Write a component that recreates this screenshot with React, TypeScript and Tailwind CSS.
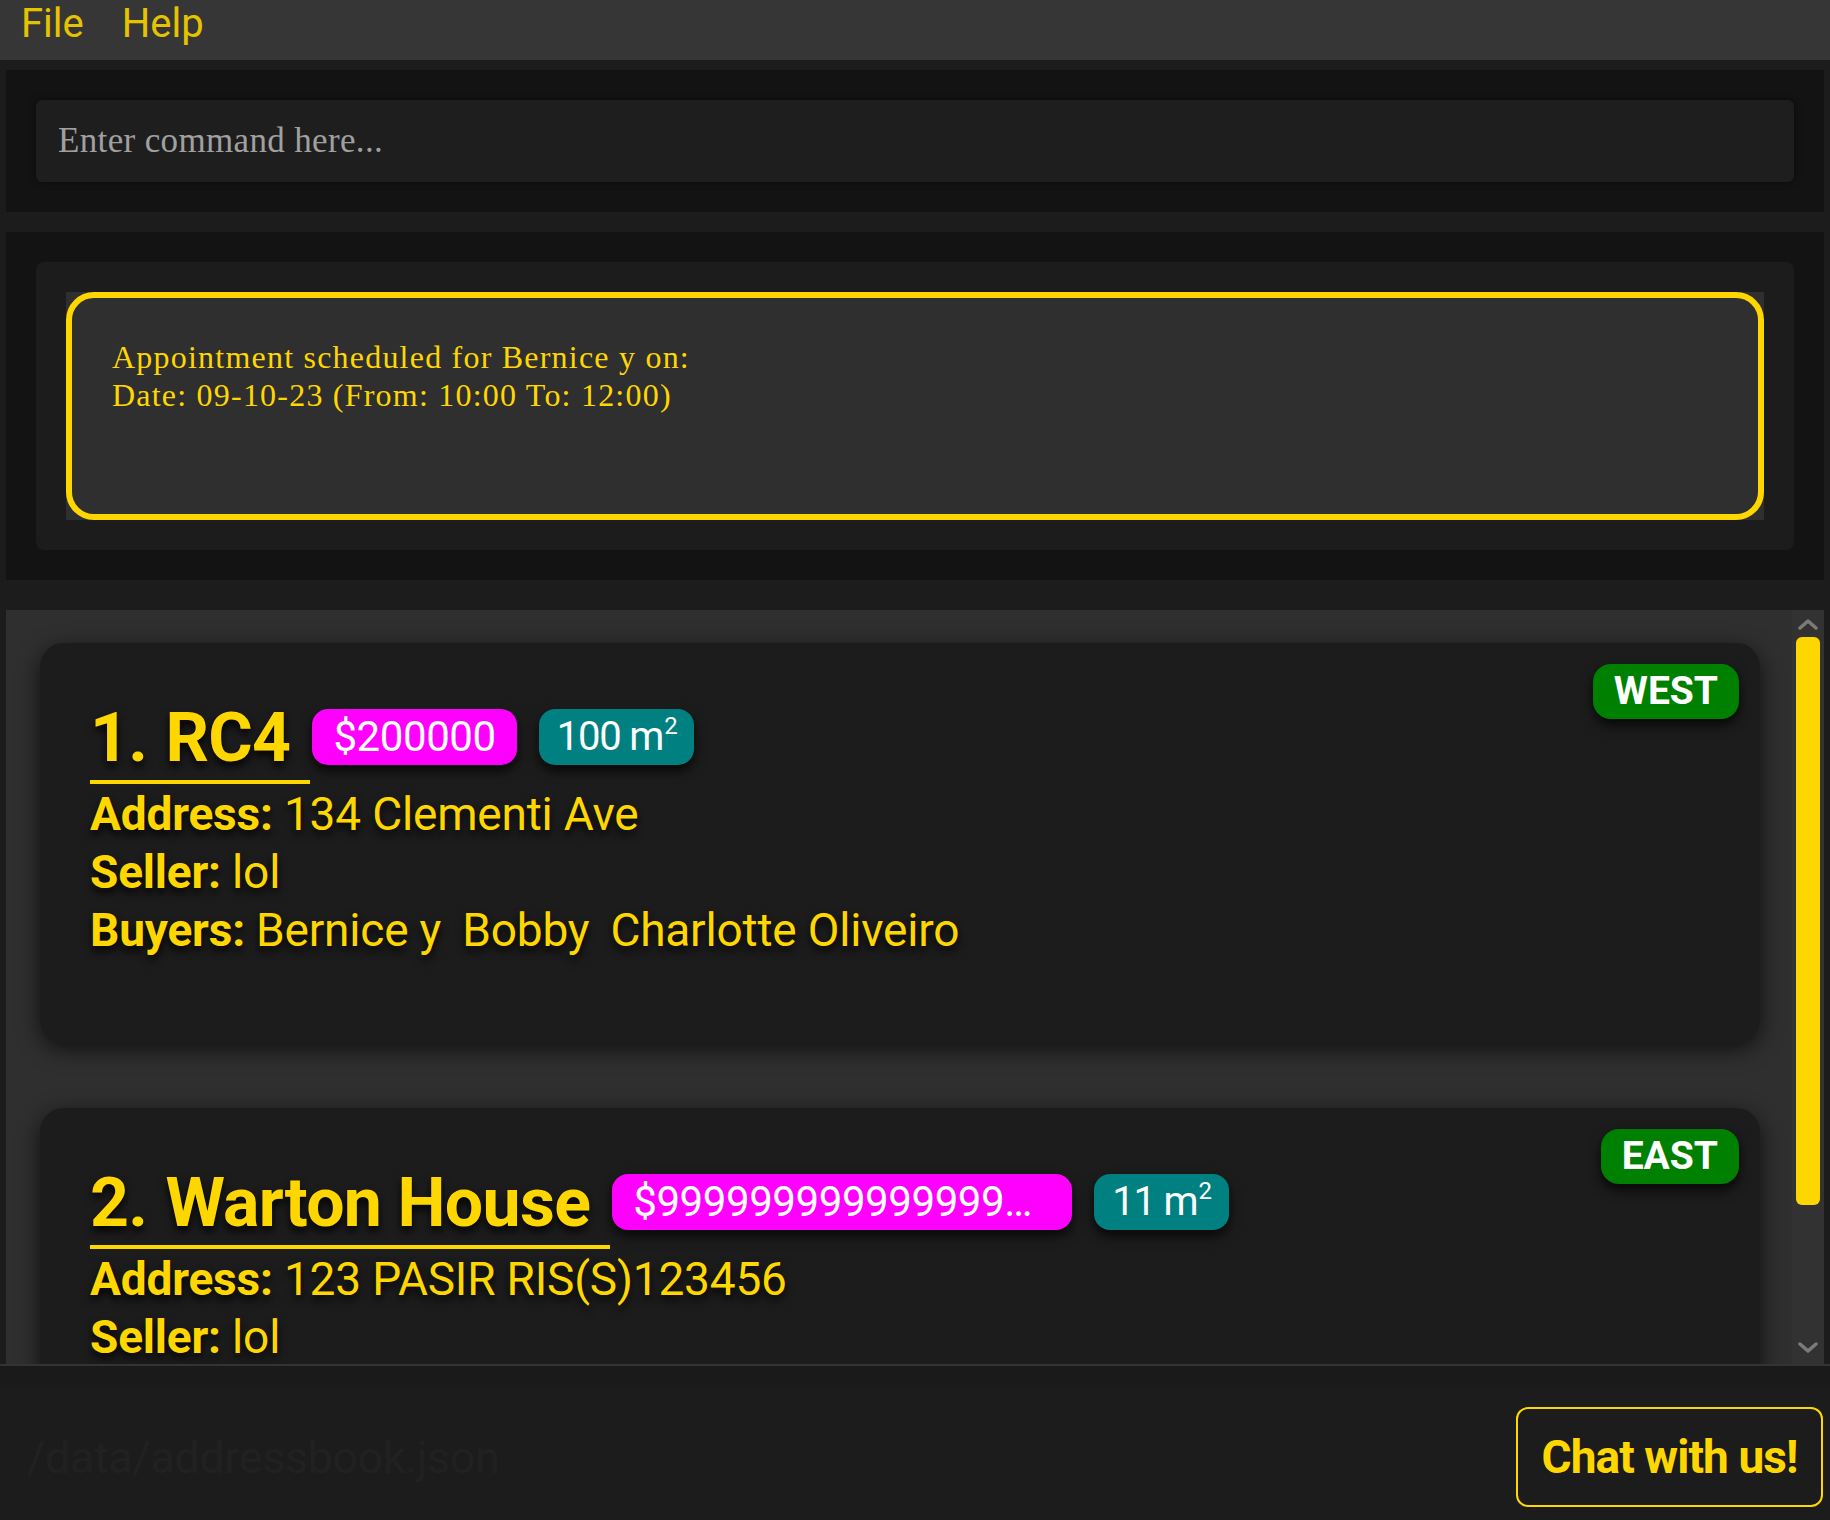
import React from "react";

const ts = "[text-shadow:0_5px_8px_rgba(0,0,0,0.9)]";

function Chevron({ down }: { down?: boolean }) {
  return (
    <svg width="20" height="11" viewBox="0 0 20 11" fill="none">
      <polyline
        points={down ? "2,2 10,9 18,2" : "2,9 10,2 18,9"}
        stroke="#7b7b7b"
        strokeWidth="3.5"
        strokeLinecap="round"
        strokeLinejoin="round"
      />
    </svg>
  );
}

type Card = {
  idx: number;
  name: string;
  price: string;
  area: string;
  region: string;
  address: string;
  seller: string;
  buyers: string[];
};

const cards: Card[] = [
  {
    idx: 1,
    name: "RC4",
    price: "$200000",
    area: "100",
    region: "WEST",
    address: "134 Clementi Ave",
    seller: "lol",
    buyers: ["Bernice y", "Bobby", "Charlotte Oliveiro"],
  },
  {
    idx: 2,
    name: "Warton House",
    price: "$9999999999999999999999999",
    area: "11",
    region: "EAST",
    address: "123 PASIR RIS(S)123456",
    seller: "lol",
    buyers: ["Bobby"],
  },
];

function PropertyCard({ c }: { c: Card }) {
  return (
    <div className="relative h-[400px] w-[1720px] shrink-0 rounded-[24px] bg-[#1c1c1c] pl-[50px] pt-[61px] shadow-[0_6px_22px_rgba(0,0,0,0.65)] text-[#ffd700]">
      <div className="absolute right-[21px] top-[21px] flex h-[55px] items-center rounded-[18px] bg-[#008000] px-[21px] text-[39px] font-bold leading-none text-white shadow-[0_6px_12px_rgba(0,0,0,0.75)]">
        {c.region}
      </div>
      <div className="flex items-start">
        <div className={`flex border-b-4 border-[#ffd700] pb-[8px] pr-[20px] text-[68px] font-bold leading-[68px] tracking-[-0.01em] ${ts}`}>
          <span>{c.idx}.</span>
          <span className="ml-[18px]">{c.name}</span>
        </div>
        <div className="ml-[2px] mt-[5px] flex h-[56px] min-w-0 max-w-[460px] items-center rounded-[16px] bg-[#ff00ff] px-[21px] text-[42px] leading-none tracking-[-0.01em] text-white shadow-[0_6px_12px_rgba(0,0,0,0.75)]">
          <span className="truncate">{c.price}</span>
        </div>
        <div className="ml-[22px] mt-[5px] flex h-[56px] items-center rounded-[16px] bg-[#008080] px-[18px] text-[40px] leading-none tracking-[-0.03em] text-white shadow-[0_6px_12px_rgba(0,0,0,0.75)]">
          <span>{c.area} m</span>
          <span className="relative -top-[11px] ml-[1px] text-[24px]">2</span>
        </div>
      </div>
      <div className={`mt-[1px] text-[46px] leading-[58px] tracking-[-0.004em] ${ts}`}>
        <div>
          <span className="font-bold">Address:</span> {c.address}
        </div>
        <div>
          <span className="font-bold">Seller:</span> {c.seller}
        </div>
        <div className="flex">
          <span className="font-bold">Buyers:</span>
          <span className="ml-[11px] flex gap-[21px]">
            {c.buyers.map((b) => (
              <span key={b}>{b}</span>
            ))}
          </span>
        </div>
      </div>
    </div>
  );
}

export default function App() {
  return (
    <div className="flex h-[1520px] w-[1830px] flex-col overflow-hidden bg-[#1c1c1c] font-['Roboto',sans-serif]">
      {/* Menu bar */}
      <div className="flex h-[60px] shrink-0 items-start gap-[38px] bg-[#363636] px-[21px] pt-[4px] text-[40px] leading-[40px] text-[#e6c300]">
        <span>File</span>
        <span>Help</span>
      </div>

      <div className="flex flex-col px-[6px] pt-[10px]">
        {/* Command box */}
        <div className="bg-[#131313] p-[30px]">
          <input
            className="h-[82px] w-full rounded-[6px] bg-[#1e1e1e] px-[22px] font-['Liberation_Serif',serif] text-[35px] tracking-[0.01em] text-[#a0a0a0] outline-none placeholder:text-[#a0a0a0] shadow-[0_0_6px_rgba(0,0,0,0.5)]"
            placeholder="Enter command here..."
          />
        </div>

        {/* Result display */}
        <div className="mt-[20px] bg-[#131313] p-[30px]">
          <div className="rounded-[8px] bg-[#1c1c1c] p-[30px]">
            <div className="h-[228px] bg-[#2f2f2f]">
              <div className="h-full rounded-[28px] border-[6px] border-[#ffd700] pl-[40px] pt-[40px] font-['Liberation_Serif',serif] text-[32px] leading-[38px] tracking-[0.038em] text-[#ffd700]">
                <div>Appointment scheduled for Bernice y on:</div>
                <div>Date: 09-10-23 (From: 10:00 To: 12:00)</div>
              </div>
            </div>
          </div>
        </div>

        {/* List panel */}
        <div className="mt-[30px] flex h-[754px] bg-[#2f2f2f]">
          <div className="flex flex-1 flex-col gap-[65px] overflow-hidden pl-[34px] pt-[33px]">
            {cards.map((c) => (
              <PropertyCard key={c.idx} c={c} />
            ))}
          </div>
          <div className="flex w-[32px] shrink-0 flex-col items-center bg-[#323232]">
            <div className="flex h-[27px] items-center pt-[2px]">
              <Chevron />
            </div>
            <div className="h-[568px] w-[24px] rounded-[6px] bg-[#ffd700]" />
            <div className="flex-1" />
            <div className="flex h-[22px] items-start">
              <Chevron down />
            </div>
          </div>
        </div>
      </div>

      {/* Status / bottom */}
      <div className="h-[2px] shrink-0 bg-[#333333]" />
      <div className="flex flex-1 bg-[linear-gradient(#1a1a1a_0,#1a1a1a_19px,#1c1c1c_19px)]">
        <div className="ml-[27px] mt-[69px] text-[45px] leading-[45px] tracking-[-0.01em] text-[#212121]">
          /data/addressbook.json
        </div>
        <div className="ml-auto mr-[7px] mt-[41px] flex h-[100px] w-[307px] items-center justify-center rounded-[12px] border-2 border-[#ffd700] text-[46px] font-bold tracking-[-0.02em] text-[#ffd700]">
          Chat with us!
        </div>
      </div>
    </div>
  );
}
